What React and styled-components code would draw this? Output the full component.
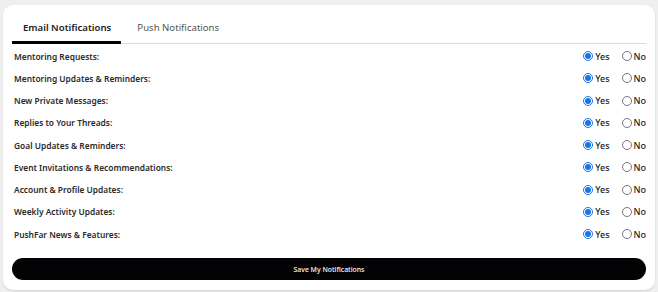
import React, { useState } from "react";
import styled, { createGlobalStyle } from "styled-components";

const GlobalStyle = createGlobalStyle`
  body {
    margin: 0;
    background: #efefef;
    font-family: "Noto Sans", "Open Sans", sans-serif;
  }
`;

const Page = styled.div`
  padding: 5px 3px 2px 3px;
`;

const Card = styled.div`
  background: #fff;
  border-radius: 10px;
  box-shadow: 0 1px 2px rgba(0, 0, 0, 0.12);
  padding: 8px 9px 10px 9px;
  height: 285px;
  box-sizing: border-box;
`;

const Tabs = styled.div`
  display: flex;
  gap: 5px;
  border-bottom: 1px solid #dcdcdc;
  height: 30px;
`;

const Tab = styled.div`
  padding: 3px 10px 0 11px;
  font-size: 9.6px;
  line-height: 24px;
  color: ${(p) => (p.active ? "#222" : "#555")};
  font-weight: ${(p) => (p.active ? 600 : 400)};
  border-bottom: 3px solid ${(p) => (p.active ? "#000" : "transparent")};
  margin-bottom: -1px;
  cursor: pointer;
`;

const List = styled.div`
  padding-top: 1px;
`;

const Row = styled.div`
  display: flex;
  align-items: center;
  justify-content: space-between;
  height: 22.25px;
  padding: 0 0 0 2px;
`;

const Label = styled.div`
  font-size: 8.4px;
  font-weight: 600;
  color: #2a2a2a;
`;

const Options = styled.div`
  display: flex;
  align-items: center;
  gap: 12px;
`;

const Option = styled.label`
  display: flex;
  align-items: center;
  gap: 2px;
  font-size: 9px;
  font-weight: 500;
  color: #222;
`;

const Radio = styled.input`
  width: 10px;
  height: 10px;
  margin: 0;
  accent-color: #1a73e8;
`;

const SaveButton = styled.button`
  display: block;
  width: 100%;
  height: 22px;
  margin-top: 13px;
  background: #030306;
  color: #fff;
  border: none;
  border-radius: 11px;
  font-family: "Noto Sans", sans-serif;
  font-size: 6.9px;
  font-weight: 500;
  cursor: pointer;
`;

const items = [
  "Mentoring Requests:",
  "Mentoring Updates & Reminders:",
  "New Private Messages:",
  "Replies to Your Threads:",
  "Goal Updates & Reminders:",
  "Event Invitations & Recommendations:",
  "Account & Profile Updates:",
  "Weekly Activity Updates:",
  "PushFar News & Features:",
];

export default function App() {
  const [tab, setTab] = useState(0);
  return (
    <>
      <GlobalStyle />
      <Page>
        <Card>
          <Tabs>
            <Tab active={tab === 0} onClick={() => setTab(0)}>
              Email Notifications
            </Tab>
            <Tab active={tab === 1} onClick={() => setTab(1)}>
              Push Notifications
            </Tab>
          </Tabs>
          <List>
            {items.map((label, i) => (
              <Row key={label}>
                <Label>{label}</Label>
                <Options>
                  <Option>
                    <Radio type="radio" name={"n" + i} defaultChecked />
                    Yes
                  </Option>
                  <Option>
                    <Radio type="radio" name={"n" + i} />
                    No
                  </Option>
                </Options>
              </Row>
            ))}
          </List>
          <SaveButton>Save My Notifications</SaveButton>
        </Card>
      </Page>
    </>
  );
}
